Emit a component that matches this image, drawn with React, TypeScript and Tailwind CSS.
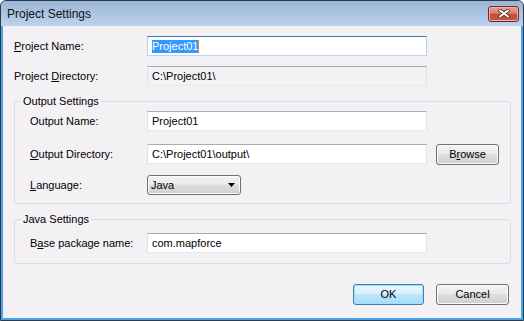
import type { ReactNode } from "react";

const btnFace =
  "bg-[linear-gradient(to_bottom,#f3f3f3_0%,#ebebeb_45%,#dddddd_50%,#cfcfcf_100%)]";

function Field({
  children,
  focused,
  readOnly,
}: {
  children: ReactNode;
  focused?: boolean;
  readOnly?: boolean;
}) {
  return (
    <div
      className={`flex h-[20px] w-[280px] items-center border pl-[4px] ${
        focused
          ? "border-[#b5cfe7] border-t-[#3d7bad] border-b-[#b7d9ed]"
          : "border-[#e2e3ea] border-t-[#abadb3] border-b-[#e3e9ef]"
      } ${readOnly ? "bg-[#f4f1f5]" : "bg-white"}`}
    >
      {children}
    </div>
  );
}

function Row({
  label,
  labelWidth,
  className = "",
  children,
}: {
  label: ReactNode;
  labelWidth: string;
  className?: string;
  children: ReactNode;
}) {
  return (
    <div className={`flex h-[20px] items-center ${className}`}>
      <span className={labelWidth}>{label}</span>
      {children}
    </div>
  );
}

function Button({
  children,
  width,
  primary,
}: {
  children: ReactNode;
  width: string;
  primary?: boolean;
}) {
  return (
    <button
      type="button"
      className={`${width} h-[21px] rounded-[3px] border text-center leading-[19px] ${
        primary
          ? "border-[#3c7fb1] bg-[linear-gradient(to_bottom,#eaf6fd_0%,#d9f0fc_45%,#bee6fd_50%,#a7d9f5_100%)] shadow-[inset_0_0_0_1px_#9fe2fb]"
          : `border-[#707070] ${btnFace} shadow-[inset_0_0_0_1px_#fcfcfc]`
      }`}
    >
      {children}
    </button>
  );
}

function Group({
  title,
  className = "",
  children,
}: {
  title: string;
  className?: string;
  children: ReactNode;
}) {
  return (
    <fieldset
      className={`w-[497px] rounded-[3px] border border-[#d5dfe5] ${className}`}
    >
      <legend className="ml-[6px] px-[2px] leading-[13px]">{title}</legend>
      {children}
    </fieldset>
  );
}

export default function App() {
  return (
    <div className="flex h-[321px] w-[524px] flex-col overflow-hidden rounded-t-[6px] border border-[#2d3a49] bg-[#4aa3e6] font-['Liberation_Sans',Arial,sans-serif] text-[11px] text-black">
      {/* title bar */}
      <div className="flex h-[25px] items-center justify-between bg-[linear-gradient(to_bottom,#9bb6d6,#bcd3ec)] pl-[6px] pr-[4px]">
        <span className="text-[12px] text-[#111]">Project Settings</span>
        <button
          type="button"
          className="flex h-[16px] w-[31px] items-center justify-center rounded-[3px] border border-[#6e2a24] bg-[linear-gradient(to_bottom,#e3a699_0%,#d3806f_45%,#c44c37_50%,#c65a43_100%)] shadow-[inset_0_0_0_1px_#eab3a8]"
        >
          <svg width="12" height="9" viewBox="0 0 12 9">
            <path
              d="M2 1.5 L10 7.5 M10 1.5 L2 7.5"
              stroke="#5a2b26"
              strokeWidth="3.6"
              strokeLinecap="round"
            />
            <path
              d="M2 1.5 L10 7.5 M10 1.5 L2 7.5"
              stroke="#ffffff"
              strokeWidth="2"
              strokeLinecap="round"
            />
          </svg>
        </button>
      </div>

      {/* client area */}
      <div className="mx-[2px] mb-[2px] flex flex-1 flex-col bg-[#f4f1f5] pl-[11px] pr-[10px] pt-[10px]">
        <Row
          labelWidth="w-[133px]"
          label={
            <>
              <u>P</u>roject Name:
            </>
          }
        >
          <Field focused>
            <span className="bg-[#3399ff] leading-[13px] text-white">
              Project01
            </span>
            <span className="h-[13px] w-[1px] bg-[#e8801a]" />
          </Field>
        </Row>

        <Row
          className="mt-[10px]"
          labelWidth="w-[133px]"
          label={
            <>
              Project <u>D</u>irectory:
            </>
          }
        >
          <Field readOnly>C:\Project01\</Field>
        </Row>

        <Group title="Output Settings" className="mt-[9px] pb-[8px]">
          <div className="pl-[15px] pt-[3px]">
            <Row labelWidth="w-[117px]" label="Output Name:">
              <Field>Project01</Field>
            </Row>
            <Row
              className="mt-[13px]"
              labelWidth="w-[117px]"
              label={
                <>
                  <u>O</u>utput Directory:
                </>
              }
            >
              <Field>C:\Project01\output\</Field>
              <div className="ml-[9px]">
                <Button width="w-[63px]">
                  B<u>r</u>owse
                </Button>
              </div>
            </Row>
            <Row
              className="mt-[11px]"
              labelWidth="w-[117px]"
              label={
                <>
                  <u>L</u>anguage:
                </>
              }
            >
              <div
                className={`flex h-[20px] w-[94px] items-center justify-between rounded-[3px] border border-[#707070] pl-[3px] pr-[5px] ${btnFace} shadow-[inset_0_0_0_1px_#fbfbfb]`}
              >
                <span>Java</span>
                <svg width="7" height="4" viewBox="0 0 7 4">
                  <polygon points="0,0 7,0 3.5,4" fill="#000" />
                </svg>
              </div>
            </Row>
          </div>
        </Group>

        <Group title="Java Settings" className="mt-[9px] pb-[10px]">
          <div className="pl-[15px] pt-[7px]">
            <Row
              labelWidth="w-[117px]"
              label={
                <>
                  B<u>a</u>se package name:
                </>
              }
            >
              <Field>com.mapforce</Field>
            </Row>
          </div>
        </Group>

        <div className="mr-[2px] mt-[20px] flex justify-end gap-[12px]">
          <Button width="w-[71px]" primary>
            OK
          </Button>
          <Button width="w-[73px]">Cancel</Button>
        </div>
      </div>
    </div>
  );
}
